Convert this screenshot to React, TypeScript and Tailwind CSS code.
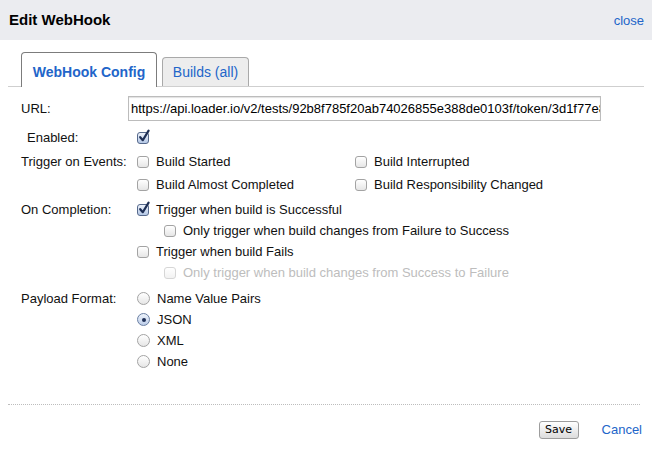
import type { ReactNode } from 'react';

const font = { fontFamily: '"Liberation Sans", Arial, sans-serif' };

const URL_VALUE =
  'https://api.loader.io/v2/tests/92b8f785f20ab74026855e388de0103f/token/3d1f77e8a1c';

function Box({ checked = false, disabled = false }: { checked?: boolean; disabled?: boolean }) {
  return (
    <span
      className={
        'relative inline-block w-[12px] h-[12px] shrink-0 rounded-[3px] border bg-linear-to-b ' +
        (checked
          ? 'border-[#56698c] from-[#eef3fb] to-[#b5c8e6]'
          : disabled
            ? 'border-[#d6d6d6] from-white to-[#f2f2f2]'
            : 'border-[#a3a3a3] from-white to-[#e6e6e6]')
      }
    >
      {checked && (
        <svg className="absolute -top-[4px] left-[0px]" width="13" height="14" viewBox="0 0 13 14">
          <path
            d="M2.2 8.2 L4.8 11.2 L10.6 1.6"
            fill="none"
            stroke="#1e2f55"
            strokeWidth="2.2"
            strokeLinecap="round"
            strokeLinejoin="round"
          />
        </svg>
      )}
    </span>
  );
}

function Radio({ checked = false }: { checked?: boolean }) {
  return (
    <span
      className={
        'relative inline-flex items-center justify-center w-[13px] h-[13px] shrink-0 rounded-full border bg-linear-to-b ' +
        (checked
          ? 'border-[#6a7fa3] from-[#eef3fb] to-[#bccde8]'
          : 'border-[#a3a3a3] from-white to-[#e6e6e6]')
      }
    >
      {checked && <span className="w-[4px] h-[4px] rounded-full bg-[#1e2f55]" />}
    </span>
  );
}

function Opt({
  children,
  control,
  disabled = false,
  className = '',
}: {
  children: ReactNode;
  control: ReactNode;
  disabled?: boolean;
  className?: string;
}) {
  return (
    <div className={'flex items-center gap-[7px] ' + className}>
      {control}
      <span className={disabled ? 'text-[#bdbdbd]' : ''}>{children}</span>
    </div>
  );
}

export default function App() {
  return (
    <div className="w-[652px] h-[464px] bg-white text-[13px] text-[#111] overflow-hidden" style={font}>
      <div className="h-[40px] bg-[#ebecf0] flex items-center justify-between pl-[9px] pr-[8px]">
        <span className="text-[15px] font-bold text-black">Edit WebHook</span>
        <a className="text-[#2265c9] pt-[1px]">close</a>
      </div>

      <div className="px-[8px] pt-[12px]">
        <div className="flex items-end gap-[5px] pl-[13px] border-b border-[#cfcfcf] h-[35px]">
          <div className="h-[35px] w-[136px] -mb-px flex items-center justify-center rounded-t-[4px] border border-b-0 border-[#7c7c7c] bg-white text-[14px] font-bold text-[#2265c9] pt-[4px]">
            WebHook Config
          </div>
          <div className="h-[29px] w-[87px] flex items-center justify-center rounded-t-[4px] border border-b-0 border-[#a9a9a9] bg-[#ededed] text-[14px] text-[#2265c9] pt-[1px]">
            Builds (all)
          </div>
        </div>

        <div className="pl-[13px] pt-[9px]">
          <div className="flex items-center h-[25px]">
            <span className="w-[107px]">URL:</span>
            <input
              readOnly
              value={URL_VALUE}
              className="w-[473px] h-[25px] border border-[#bcbcbc] shadow-[inset_0_1px_1px_rgba(0,0,0,0.12)] pl-[2px] text-[13px] text-black outline-none"
              style={font}
            />
          </div>

          <div className="flex items-center h-[20px] mt-[7px]">
            <span className="w-[116px] pl-[6px]">Enabled:</span>
            <Box checked />
          </div>

          <div className="flex mt-[2px]">
            <span className="w-[116px] h-[23px] flex items-center">Trigger on Events:</span>
            <div className="grid grid-cols-[218px_auto]">
              <Opt className="h-[23px]" control={<Box />}>Build Started</Opt>
              <Opt className="h-[23px]" control={<Box />}>Build Interrupted</Opt>
              <Opt className="h-[23px]" control={<Box />}>Build Almost Completed</Opt>
              <Opt className="h-[23px]" control={<Box />}>Build Responsibility Changed</Opt>
            </div>
          </div>

          <div className="flex mt-[3px]">
            <span className="w-[116px] h-[21px] flex items-center">On Completion:</span>
            <div className="flex flex-col">
              <Opt className="h-[21px]" control={<Box checked />}>Trigger when build is Successful</Opt>
              <Opt className="h-[21px] pl-[27px]" control={<Box />}>
                Only trigger when build changes from Failure to Success
              </Opt>
              <Opt className="h-[21px]" control={<Box />}>Trigger when build Fails</Opt>
              <Opt className="h-[21px] pl-[27px]" control={<Box disabled />} disabled>
                Only trigger when build changes from Success to Failure
              </Opt>
            </div>
          </div>

          <div className="flex mt-[5px]">
            <span className="w-[116px] h-[21px] flex items-center">Payload Format:</span>
            <div className="flex flex-col">
              <Opt className="h-[21px]" control={<Radio />}>Name Value Pairs</Opt>
              <Opt className="h-[21px]" control={<Radio checked />}>JSON</Opt>
              <Opt className="h-[21px]" control={<Radio />}>XML</Opt>
              <Opt className="h-[21px]" control={<Radio />}>None</Opt>
            </div>
          </div>
        </div>

        <div className="mt-[32px] border-t border-dotted border-[#bdbdbd] w-[632px]" />

        <div className="flex items-center justify-end gap-[23px] pr-[2px] mt-[15px]">
          <button
            className="h-[18px] w-[40px] rounded-[3px] border border-[#9d9d9d] bg-linear-to-b from-white to-[#dcdcdc] text-black leading-none"
            style={{ fontFamily: '"DejaVu Sans", "Liberation Sans", sans-serif', fontSize: 11 }}
          >
            Save
          </button>
          <a className="text-[#2265c9]">Cancel</a>
        </div>
      </div>
    </div>
  );
}
